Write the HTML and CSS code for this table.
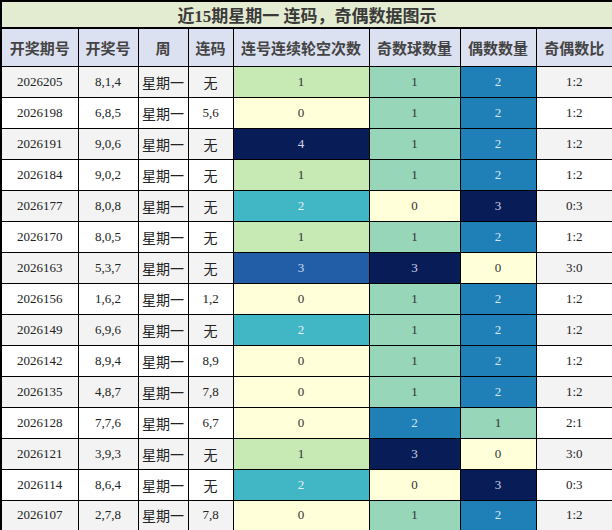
FILE: index.html
```html
<!DOCTYPE html>
<html lang="zh">
<head>
<meta charset="utf-8">
<link rel="stylesheet" href="styles.css">
</head>
<body>
<table class="chart">
<colgroup>
<col class="c1"><col class="c2"><col class="c3"><col class="c4"><col class="c5"><col class="c6"><col class="c7"><col class="c8">
</colgroup>
<thead>
<tr class="title-row"><th colspan="8" class="title">近15期星期一 连码，奇偶数据图示</th></tr>
<tr class="head-row"><th>开奖期号</th><th>开奖号</th><th>周</th><th>连码</th><th>连号连续轮空次数</th><th>奇数球数量</th><th>偶数数量</th><th>奇偶数比</th></tr>
</thead>
<tbody>
<tr class="odd"><td class="num">2026205</td><td class="num">8,1,4</td><td class="cjk">星期一</td><td class="cjk">无</td><td class="num g1">1</td><td class="num o1">1</td><td class="num o2">2</td><td class="num">1:2</td></tr>
<tr><td class="num">2026198</td><td class="num">6,8,5</td><td class="cjk">星期一</td><td class="num">5,6</td><td class="num g0">0</td><td class="num o1">1</td><td class="num o2">2</td><td class="num">1:2</td></tr>
<tr class="odd"><td class="num">2026191</td><td class="num">9,0,6</td><td class="cjk">星期一</td><td class="cjk">无</td><td class="num g4">4</td><td class="num o1">1</td><td class="num o2">2</td><td class="num">1:2</td></tr>
<tr><td class="num">2026184</td><td class="num">9,0,2</td><td class="cjk">星期一</td><td class="cjk">无</td><td class="num g1">1</td><td class="num o1">1</td><td class="num o2">2</td><td class="num">1:2</td></tr>
<tr class="odd"><td class="num">2026177</td><td class="num">8,0,8</td><td class="cjk">星期一</td><td class="cjk">无</td><td class="num g2">2</td><td class="num o0">0</td><td class="num o3">3</td><td class="num">0:3</td></tr>
<tr><td class="num">2026170</td><td class="num">8,0,5</td><td class="cjk">星期一</td><td class="cjk">无</td><td class="num g1">1</td><td class="num o1">1</td><td class="num o2">2</td><td class="num">1:2</td></tr>
<tr class="odd"><td class="num">2026163</td><td class="num">5,3,7</td><td class="cjk">星期一</td><td class="cjk">无</td><td class="num g3">3</td><td class="num o3">3</td><td class="num o0">0</td><td class="num">3:0</td></tr>
<tr><td class="num">2026156</td><td class="num">1,6,2</td><td class="cjk">星期一</td><td class="num">1,2</td><td class="num g0">0</td><td class="num o1">1</td><td class="num o2">2</td><td class="num">1:2</td></tr>
<tr class="odd"><td class="num">2026149</td><td class="num">6,9,6</td><td class="cjk">星期一</td><td class="cjk">无</td><td class="num g2">2</td><td class="num o1">1</td><td class="num o2">2</td><td class="num">1:2</td></tr>
<tr><td class="num">2026142</td><td class="num">8,9,4</td><td class="cjk">星期一</td><td class="num">8,9</td><td class="num g0">0</td><td class="num o1">1</td><td class="num o2">2</td><td class="num">1:2</td></tr>
<tr class="odd"><td class="num">2026135</td><td class="num">4,8,7</td><td class="cjk">星期一</td><td class="num">7,8</td><td class="num g0">0</td><td class="num o1">1</td><td class="num o2">2</td><td class="num">1:2</td></tr>
<tr><td class="num">2026128</td><td class="num">7,7,6</td><td class="cjk">星期一</td><td class="num">6,7</td><td class="num g0">0</td><td class="num o2">2</td><td class="num o1">1</td><td class="num">2:1</td></tr>
<tr class="odd"><td class="num">2026121</td><td class="num">3,9,3</td><td class="cjk">星期一</td><td class="cjk">无</td><td class="num g1">1</td><td class="num o3">3</td><td class="num o0">0</td><td class="num">3:0</td></tr>
<tr><td class="num">2026114</td><td class="num">8,6,4</td><td class="cjk">星期一</td><td class="cjk">无</td><td class="num g2">2</td><td class="num o0">0</td><td class="num o3">3</td><td class="num">0:3</td></tr>
<tr class="odd"><td class="num">2026107</td><td class="num">2,7,8</td><td class="cjk">星期一</td><td class="num">7,8</td><td class="num g0">0</td><td class="num o1">1</td><td class="num o2">2</td><td class="num">1:2</td></tr>
</tbody>
</table>
</body>
</html>
```
FILE: styles.css
```css
html, body {
  margin: 0;
  padding: 0;
  background: #ffffff;
}
.chart {
  width: 612px;
  border-collapse: collapse;
  table-layout: fixed;
  border: 2px solid #000;
}
.c1 { width: 77px; }
.c2 { width: 60px; }
.c3 { width: 50px; }
.c4 { width: 45px; }
.c5 { width: 136px; }
.c6 { width: 91px; }
.c7 { width: 76px; }
.c8 { width: 77px; }
th, td {
  border: 1px solid #000;
  padding: 0;
  text-align: center;
  vertical-align: middle;
}
.title-row { height: 26px; }
.title {
  background: #e3ebd0;
  color: #3a3a3a;
  font: bold 17px "Liberation Serif", "Noto Sans CJK SC", serif;
  border-bottom: 2px solid #000;
}
.head-row { height: 38px; }
.head-row th {
  background: #dce1f1;
  color: #444;
  font: bold 15px "Noto Sans CJK SC", sans-serif;
}
tbody tr { height: 31px; background: #fff; }
tbody tr.odd { background: #f3f3f3; }
.num {
  font: 13px "Liberation Serif", "Noto Sans CJK SC", serif;
  color: #222;
}
.cjk {
  font: 14px "Noto Sans CJK SC", sans-serif;
  color: #222;
}
.g0 { background: #ffffd9; color: #333; }
.g1 { background: #c7e9b4; color: #333; }
.g2 { background: #41b6c4; color: #e6f0f0; }
.g3 { background: #225ea8; color: #d0dcee; }
.g4 { background: #081d58; color: #d0d6e6; }
.o0 { background: #ffffd9; color: #333; }
.o1 { background: #97d6b9; color: #333; }
.o2 { background: #1f80b8; color: #d6e6f2; }
.o3 { background: #081d58; color: #d0d6e6; }
```
